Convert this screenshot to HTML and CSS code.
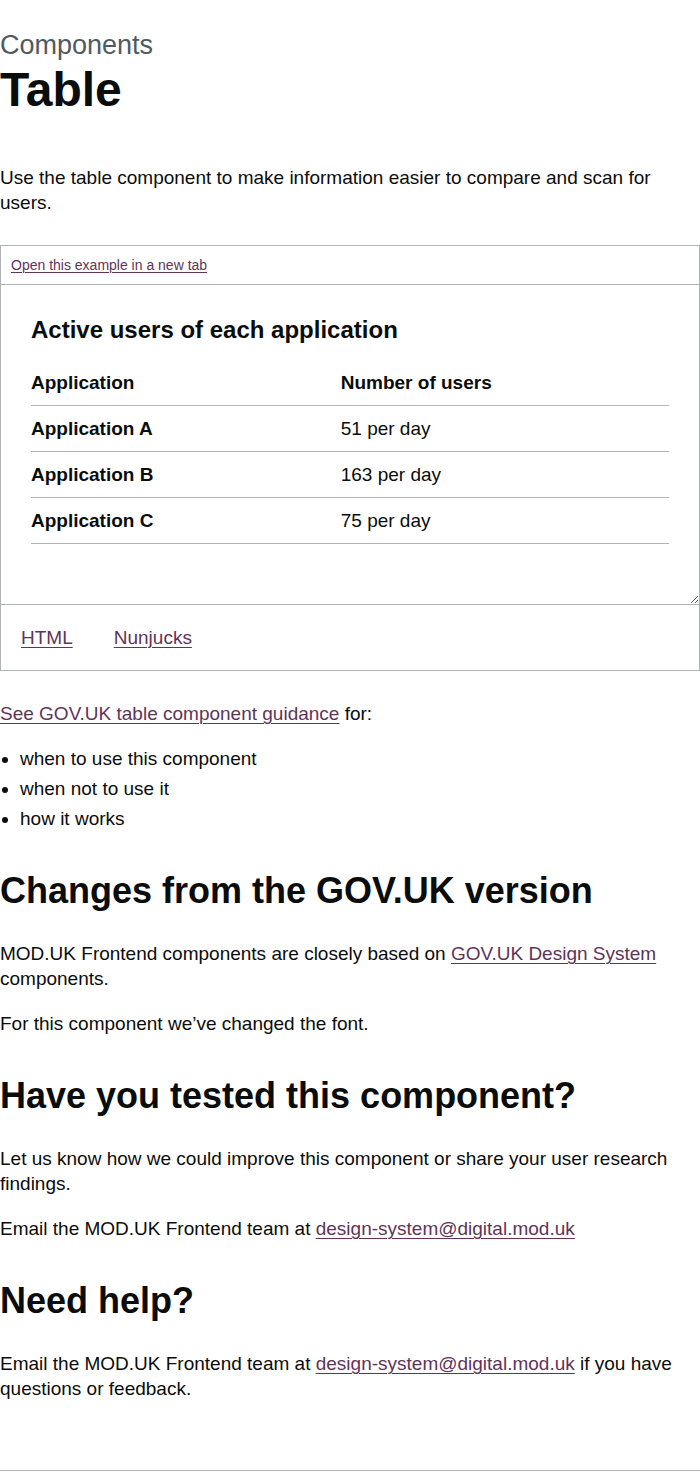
FILE: index.html
```html
<!DOCTYPE html>
<html lang="en">
<head>
<meta charset="utf-8">
<title>Table</title>
<link rel="stylesheet" href="styles.css">
</head>
<body>
<main class="main">
  <span class="caption">Components</span>
  <h1 class="title">Table</h1>
  <p class="body intro">Use the table component to make information easier to compare and scan for users.</p>

  <div class="example">
    <div class="example-bar">
      <a class="link small" href="#">Open this example in a new tab</a>
    </div>
    <div class="example-frame">
      <table class="table">
        <caption class="table-caption">Active users of each application</caption>
        <thead>
          <tr><th class="cell head">Application</th><th class="cell head">Number of users</th></tr>
        </thead>
        <tbody>
          <tr><th class="cell head">Application A</th><td class="cell">51 per day</td></tr>
          <tr><th class="cell head">Application B</th><td class="cell">163 per day</td></tr>
          <tr><th class="cell head">Application C</th><td class="cell">75 per day</td></tr>
        </tbody>
      </table>
    </div>
    <div class="example-tabs">
      <a class="link" href="#">HTML</a>
      <a class="link" href="#">Nunjucks</a>
    </div>
  </div>

  <p class="body"><a class="link" href="#">See GOV.UK table component guidance</a> for:</p>
  <ul class="list">
    <li>when to use this component</li>
    <li>when not to use it</li>
    <li>how it works</li>
  </ul>

  <h2 class="heading">Changes from the GOV.UK version</h2>
  <p class="body">MOD.UK Frontend components are closely based on <a class="link" href="#">GOV.UK Design System</a> components.</p>
  <p class="body">For this component we’ve changed the font.</p>

  <h2 class="heading">Have you tested this component?</h2>
  <p class="body">Let us know how we could improve this component or share your user research findings.</p>
  <p class="body">Email the MOD.UK Frontend team at <a class="link" href="#">design-system@digital.mod.uk</a></p>

  <h2 class="heading">Need help?</h2>
  <p class="body">Email the MOD.UK Frontend team at <a class="link" href="#">design-system@digital.mod.uk</a> if you have questions or feedback.</p>
</main>
<footer class="footer"></footer>
</body>
</html>
```

FILE: styles.css
```css
html, body {
  margin: 0;
  padding: 0;
  background: #ffffff;
}

body {
  font-family: "Liberation Sans", Arial, sans-serif;
  color: #0b0c0c;
  -webkit-font-smoothing: antialiased;
}

.main {
  padding: 30px 0 49px;
}

.caption {
  display: block;
  font-size: 27px;
  line-height: 30px;
  color: #505a5f;
  margin-bottom: 5px;
}

.title {
  font-size: 48px;
  line-height: 50px;
  font-weight: 700;
  margin: 0 0 50px;
}

.body {
  font-size: 19px;
  line-height: 25px;
  margin: 0 0 20px;
}

.intro {
  margin-bottom: 30px;
}

.link {
  color: #5f3458;
  text-decoration: underline;
  text-decoration-thickness: 1px;
  text-underline-offset: 0.15em;
}

.small {
  font-size: 14px;
  line-height: 20px;
}

.example {
  border: 1px solid #b1b4b6;
  margin-bottom: 30px;
}

.example-bar {
  padding: 9px 10px;
  border-bottom: 1px solid #b1b4b6;
  line-height: 20px;
}

.example-frame {
  padding: 30px 30px;
  border-bottom: 1px solid #b1b4b6;
  resize: both;
  overflow: auto;
}

.table {
  width: 100%;
  border-collapse: collapse;
  border-spacing: 0;
  font-size: 19px;
  line-height: 25px;
  margin-bottom: 30px;
}

.table-caption {
  text-align: left;
  font-size: 24px;
  line-height: 30px;
  font-weight: 700;
  margin-bottom: 15px;
}

.cell {
  text-align: left;
  vertical-align: top;
  padding: 10px 20px 10px 0;
  border-bottom: 1px solid #b1b4b6;
}

.cell:last-child {
  padding-right: 0;
}

.head {
  font-weight: 700;
}

td.cell {
  font-weight: 400;
}

.example-tabs {
  display: flex;
  gap: 41px;
  padding: 20px 20px;
  font-size: 19px;
  line-height: 25px;
}

.list {
  font-size: 19px;
  line-height: 25px;
  margin: 0 0 20px;
  padding-left: 20px;
}

.list li {
  margin-bottom: 5px;
}

.heading {
  font-size: 36px;
  line-height: 40px;
  font-weight: 700;
  margin: 40px 0 30px;
}

.footer {
  border-top: 1px solid #b1b4b6;
  height: 10px;
}
```
